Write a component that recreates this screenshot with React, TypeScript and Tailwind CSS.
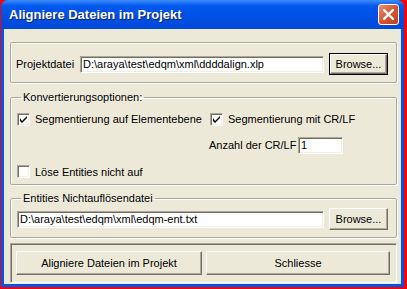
import type { ReactNode } from "react";

const font = { fontFamily: '"Liberation Sans", Arial, sans-serif' };

const Check = ({ checked }: { checked?: boolean }) => (
  <span className="flex h-[13px] w-[13px] shrink-0 items-center justify-center border border-t-[#ACA899] border-l-[#ACA899] border-b-white border-r-white bg-white shadow-[inset_1px_1px_0_#716F64,inset_-1px_-1px_0_#F1EFE2]">
    {checked && (
      <svg width="7" height="7" viewBox="0 0 7 7">
        <path d="M0 2v3l2 2 5-5V0L2 5z" fill="#000" />
      </svg>
    )}
  </span>
);

const Field = ({ value, className }: { value: string; className: string }) => (
  <div
    className={`flex h-[17px] items-center border border-t-[#ACA899] border-l-[#ACA899] border-b-white border-r-white bg-white pl-[2px] shadow-[inset_1px_1px_0_#716F64,inset_-1px_-1px_0_#F1EFE2] ${className}`}
  >
    {value}
  </div>
);

const Button = ({ children, outlined, className }: { children: ReactNode; outlined?: boolean; className: string }) => (
  <div className={`${outlined ? "border border-black" : ""} ${className}`}>
    <div className="flex h-full w-full items-center justify-center border border-t-white border-l-white border-b-[#716F64] border-r-[#716F64] bg-[#ECE9D8] shadow-[inset_-1px_-1px_0_#ACA899]">
      {children}
    </div>
  </div>
);

const Group = ({ title, children, className }: { title?: string; children: ReactNode; className: string }) => (
  <fieldset
    className={`rounded-[2px] border border-[#ACA899] shadow-[1px_1px_0_white,inset_1px_1px_0_white] ${className}`}
  >
    {title && <legend className="ml-[4px] px-[2px] leading-[13px]">{title}</legend>}
    {children}
  </fieldset>
);

export default function App() {
  return (
    <div className="h-[289px] w-[407px] bg-[#ff0000] pb-[2px] pl-[1px] pr-[3px] text-[11px] text-black" style={font}>
      <div className="flex h-full flex-col overflow-hidden rounded-t-[7px] bg-[#0055EA]">
        <div className="flex h-[29px] shrink-0 items-center justify-between bg-gradient-to-b from-[#3D8CFF] via-[#0058EE] via-[20%] to-[#0048D8] pl-[8px] pr-[5px]">
          <span className="pt-[1px] text-[13px] font-bold text-white [text-shadow:1px_1px_0_#0A1E6E]">
            Aligniere Dateien im Projekt
          </span>
          <div className="flex h-[21px] w-[21px] items-center justify-center rounded-[3px] border border-white bg-gradient-to-br from-[#E98E72] via-[#D9542F] to-[#C13D1C]">
            <svg width="11" height="11" viewBox="0 0 11 11">
              <path d="M1 1l9 9M10 1l-9 9" stroke="white" strokeWidth="2.4" strokeLinecap="square" />
            </svg>
          </div>
        </div>
        <div className="mx-[3px] mb-[3px] mr-[3px] flex flex-1 flex-col bg-[#ECE9D8] pl-[6px] pr-[4px] pt-[13px]">
          <Group className="px-[5px] pb-[7px] pt-[10px] pr-[6px]">
            <div className="flex items-center">
              <span className="w-[64px]">Projektdatei</span>
              <Field value="D:\araya\test\edqm\xml\ddddalign.xlp" className="w-[244px]" />
              <Button outlined className="ml-[5px] h-[22px] w-[59px]">Browse...</Button>
            </div>
          </Group>

          <Group title="Konvertierungsoptionen:" className="mt-[8px] h-[94px] px-[6px] pt-[7px]">
            <div className="flex items-center gap-[5px]">
              <div className="flex w-[188px] items-center gap-[5px]">
                <Check checked />
                <span>Segmentierung auf Elementebene</span>
              </div>
              <Check checked />
              <span>Segmentierung mit CR/LF</span>
            </div>
            <div className="mt-[9px] flex items-center pl-[192px]">
              <span className="w-[89px]">Anzahl der CR/LF</span>
              <Field value="1" className="w-[45px]" />
            </div>
            <div className="mt-[10px] flex items-center gap-[5px]">
              <Check />
              <span>Löse Entities nicht auf</span>
            </div>
          </Group>

          <Group title="Entities Nichtauflösendatei" className="mt-[7px] h-[46px] pl-[6px] pr-[6px] pt-[3px]">
            <div className="flex items-center">
              <Field value="D:\araya\test\edqm\xml\edqm-ent.txt" className="w-[307px]" />
              <Button className="ml-[5px] h-[22px] w-[59px]">Browse...</Button>
            </div>
          </Group>

          <div className="mt-[5px] flex h-[40px] items-center gap-[4px] border border-t-[#ACA899] border-l-[#ACA899] border-b-white border-r-white pl-[5px] shadow-[inset_1px_1px_0_#716F64]">
            <Button className="h-[24px] w-[186px]">Aligniere Dateien im Projekt</Button>
            <Button className="h-[24px] w-[184px]">Schliesse</Button>
          </div>
        </div>
      </div>
    </div>
  );
}
